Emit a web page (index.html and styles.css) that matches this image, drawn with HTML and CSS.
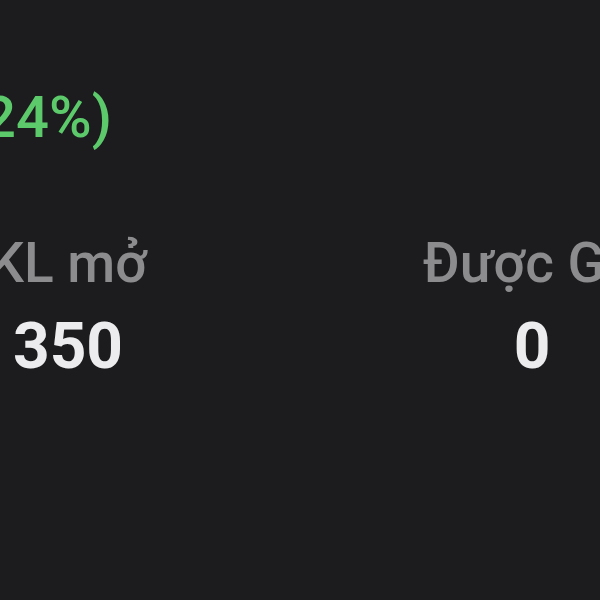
FILE: index.html
```html
<!DOCTYPE html>
<html lang="vi">
<head>
    <meta charset="UTF-8">
    <meta name="viewport" content="width=device-width, initial-scale=1.0">
    <title>Thông tin mã</title>
    <link rel="stylesheet" href="styles.css">
</head>
<body>
    <main class="screen">
        <div class="change">24%)</div>

        <div class="stats">
            <div class="stat">
                <div class="stat-label">KL mở</div>
                <div class="stat-value">350</div>
            </div>
            <div class="stat">
                <div class="stat-label">Được GD</div>
                <div class="stat-value">0</div>
            </div>
        </div>
    </main>
</body>
</html>
```

FILE: styles.css
```css
body {
    font-family: 'Roboto', 'Liberation Sans', sans-serif;
    background: #1c1c1e;
    color: #ececee;
    margin: 0;
    padding: 0;
    overflow: hidden;
}

.screen {
    width: 696px;
    margin-left: -48px;
    padding-top: 88px;
}

.change {
    margin-left: 31px;
    font-size: 58px;
    line-height: 1;
    font-weight: 500;
    color: #5cc96b;
}

.stats {
    display: flex;
    justify-content: space-between;
    margin-top: 90px;
}

.stat {
    width: 232px;
    text-align: center;
    white-space: nowrap;
}

.stat-label {
    font-size: 55px;
    line-height: 1;
    font-weight: 500;
    color: #8c8c8e;
}

.stat-value {
    margin-top: 24px;
    font-size: 64px;
    line-height: 1;
    font-weight: 700;
    color: #ececee;
}
```
